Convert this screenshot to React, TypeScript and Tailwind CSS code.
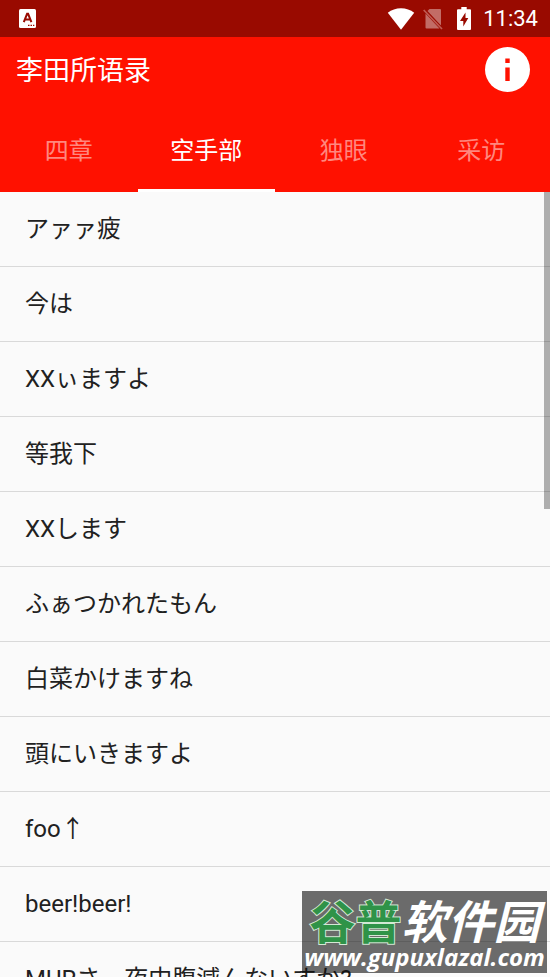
import { useState } from "react";

const TABS = ["四章", "空手部", "独眼", "采访"];

const QUOTES = [
  "アァァ疲",
  "今は",
  "XXぃますよ",
  "等我下",
  "XXします",
  "ふぁつかれたもん",
  "白菜かけますね",
  "頭にいきますよ",
  "foo↑",
  "beer!beer!",
  "MURさ、夜中腹減んないすか?",
];

function StatusBar() {
  return (
    <div className="flex h-[37px] shrink-0 items-center justify-between bg-[#990a00] pl-[19px] pr-3 text-white">
      {/* Input method badge */}
      <svg width="17" height="19" viewBox="0 0 17 19" aria-hidden>
        <rect width="17" height="19" rx="1.5" fill="#fff" />
        <path d="M4.8 13.2 8.1 4.8h1L12.4 13.2M6.2 10.4h4.8" fill="none" stroke="#990a00" strokeWidth="2" />
        <path d="M9 16.3h1.5M11.5 16.3H13M14 16.3h1.3" stroke="#990a00" strokeWidth="1.3" />
      </svg>
      <div className="flex items-center">
        <svg width="28" height="22" viewBox="0 0 28 22" aria-hidden>
          <path d="M.8 4.8C4.5 1.8 9 .3 14 .3s9.5 1.5 13.2 4.5L14 21.7z" fill="#fff" />
        </svg>
        <svg className="ml-2" width="20" height="22" viewBox="0 0 20 22" aria-hidden>
          <path d="M6.5 1H17a1 1 0 0 1 1 1v15.5L4.5 3zM2.5 5.5 16.5 20.5H3.5a1 1 0 0 1-1-1z" fill="#fff" fillOpacity=".4" />
          <path d="m.7 2 18.3 19" stroke="#c05a52" strokeWidth="1.7" />
        </svg>
        <svg className="ml-3.5" width="14" height="23" viewBox="0 0 14 23" aria-hidden>
          <path d="M4.3 0h5.4v2.3H13a1 1 0 0 1 1 1V22a1 1 0 0 1-1 1H1a1 1 0 0 1-1-1V3.3a1 1 0 0 1 1-1h3.3z" fill="#fff" />
          <path d="M8.5 5.5 3 14h3.3v5.5L11.3 11H8.5z" fill="#990a00" />
        </svg>
        <span className="ml-3 text-[22px] leading-6">11:34</span>
      </div>
    </div>
  );
}

function Watermark() {
  return (
    <div
      className="pointer-events-none absolute bottom-1 right-[3px] flex h-[82px] w-[245px] flex-col items-center justify-end bg-[#0c0c0c]/60 pb-0.5 whitespace-nowrap text-white"
      aria-hidden
    >
      <p className="flex h-12 items-center font-['Noto_Sans_CJK_SC',sans-serif] text-[46px] font-bold leading-none">
        <span className="text-[#2f9348] [-webkit-text-stroke:2px_#d3e8d5] [paint-order:stroke_fill]">谷普</span>
        <span className="italic">软件园</span>
      </p>
      <p className="font-['Open_Sans',sans-serif] text-2xl font-bold leading-7 italic">www.gupuxlazal.com</p>
    </div>
  );
}

export default function App() {
  const [active, setActive] = useState(1);

  return (
    <div className="relative flex h-screen flex-col overflow-hidden bg-[#fafafa] font-[Roboto,'Noto_Sans_CJK_JP',sans-serif]">
      <StatusBar />

      <header className="shrink-0 bg-[#ff1100] font-[Roboto,'Noto_Sans_CJK_SC',sans-serif] text-white">
        <div className="flex h-16 items-center justify-between pl-4 pr-5">
          <h1 className="pt-1 text-[27px] leading-8">李田所语录</h1>
          <button type="button" aria-label="关于">
            <svg width="45" height="45" viewBox="0 0 45 45" aria-hidden>
              <circle cx="22.5" cy="22.5" r="22.5" fill="#fff" />
              <path d="M20.3 11.5h4.4V16h-4.4zM20.3 20.5h4.4V34h-4.4z" fill="#ff1100" />
            </svg>
          </button>
        </div>
        <div className="grid grid-cols-4 pt-2" role="tablist">
          {TABS.map((tab, i) => (
            <button
              key={tab}
              type="button"
              role="tab"
              aria-selected={i === active}
              onClick={() => setActive(i)}
              className={`h-[83px] border-y-3 border-t-transparent text-2xl ${
                i === active ? "border-b-white text-white" : "border-b-transparent text-white/50"
              }`}
            >
              {tab}
            </button>
          ))}
        </div>
      </header>

      <main className="relative min-h-0 flex-1 overflow-hidden">
        <ul>
          {QUOTES.map((quote) => (
            <li key={quote} className="border-b border-[#d9d9d9]">
              <button type="button" className="h-[74px] w-full whitespace-nowrap px-[25px] text-left text-2xl text-[#212121]">
                {quote}
              </button>
            </li>
          ))}
        </ul>
        {/* Scroll thumb */}
        <div className="absolute right-0 top-0 h-[317px] w-1.5 bg-black/30" />
      </main>

      <Watermark />
    </div>
  );
}
